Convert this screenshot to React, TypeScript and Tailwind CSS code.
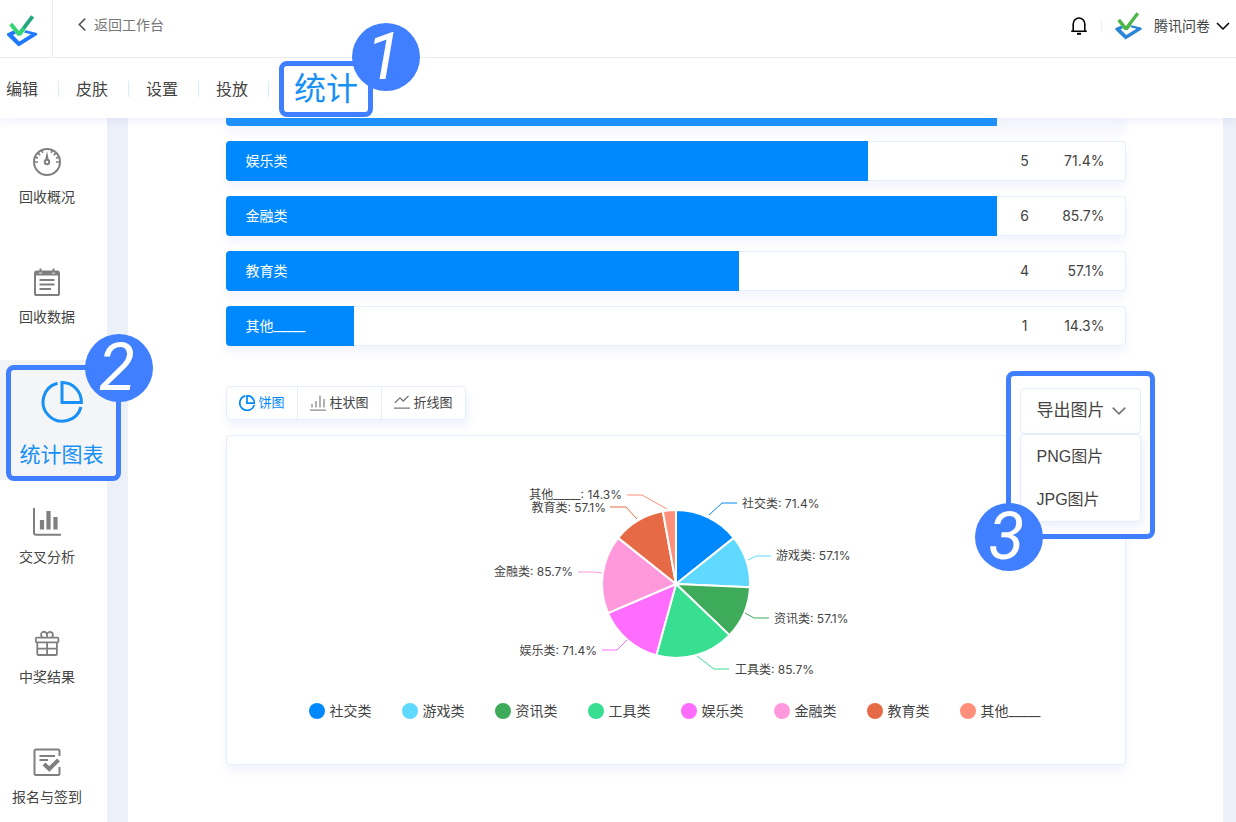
import React from "react";

type Slice = { name: string; count: number; percent: string; color: string };

const slices: Slice[] = [
  { name: "社交类", count: 5, percent: "71.4%", color: "#0089ff" },
  { name: "游戏类", count: 4, percent: "57.1%", color: "#5fd9ff" },
  { name: "资讯类", count: 4, percent: "57.1%", color: "#3dab5a" },
  { name: "工具类", count: 6, percent: "85.7%", color: "#38df91" },
  { name: "娱乐类", count: 5, percent: "71.4%", color: "#ff6dff" },
  { name: "金融类", count: 6, percent: "85.7%", color: "#ff99dc" },
  { name: "教育类", count: 4, percent: "57.1%", color: "#e66a45" },
  { name: "其他_____", count: 1, percent: "14.3%", color: "#ff8f7a" },
];

// Leader lines and label anchors, measured from the centre of the pie.
const leaders = [
  { line: "33,-69 46,-81 61,-81", x: 66, y: -76, end: false },
  { line: "72,-24 80,-28 95,-28", x: 100, y: -24, end: false },
  { line: "69,29 78,34 93,34", x: 98, y: 39, end: false },
  { line: "21,72 38,85 53,85", x: 59, y: 90, end: false },
  { line: "-49,56 -59,66 -74,66", x: -79, y: 71, end: true },
  { line: "-74,-11 -83,-12 -98,-12", x: -103, y: -8, end: true },
  { line: "-39,-65 -50,-77 -66,-77", x: -70, y: -72, end: true },
  { line: "-9,-75 -34,-89 -49,-89", x: -54, y: -85, end: true },
];

const RADIUS = 74;

function wedge(from: number, to: number) {
  const a = from * 2 * Math.PI;
  const b = to * 2 * Math.PI;
  return `M0 0L${RADIUS * Math.sin(a)} ${-RADIUS * Math.cos(a)}A${RADIUS} ${RADIUS} 0 0 1 ${RADIUS * Math.sin(b)} ${-RADIUS * Math.cos(b)}Z`;
}

function Logo({ className, tick, base, light }: { className: string; tick: string; base: string; light: string }) {
  return (
    <svg viewBox="0 0 30 32" className={className} fill="none" aria-hidden="true">
      <path d="M6.5 15.6L0 18.4V20.2L11.6 31.4L30 20V18L18.6 15.2L17 17.4L24 19.2L12.4 26.4L6 20L9 18.4Z" fill={base} />
      <path d="M11.8 19.6L25.6 1.4" stroke={tick} strokeWidth="3.8" />
      <path d="M3.8 9L12.6 20" stroke={light} strokeWidth="4" />
      <path d="M12.4 19.6L17 13.4" stroke={light} strokeWidth="3.8" />
    </svg>
  );
}

function Badge({ n, className }: { n: number; className: string }) {
  return (
    <span
      className={`absolute flex size-[68px] items-center justify-center rounded-full bg-[#407fff] pr-1 font-['Roboto',sans-serif] text-[66px] leading-none text-white italic ${className}`}
    >
      {n}
    </span>
  );
}

function Gauge() {
  return (
    <svg viewBox="0 0 28 28" className="size-7" fill="none" stroke="#7f7f7f" aria-hidden="true">
      <circle cx="14" cy="14" r="13" strokeWidth="2" />
      <path d="M1.5 14H5M23 14H26.5M4.6 4.6L7.2 7.2M23.4 4.6L20.8 7.2M2.6 9.2L4.9 10.1M25.4 9.2L23.1 10.1M8.6 2L9.8 4.8M19.4 2L18.2 4.8" strokeWidth="1.7" />
      <circle cx="14" cy="14" r="2.2" strokeWidth="2" />
      <path d="M14 3L15.8 12H12.2Z" fill="#7f7f7f" stroke="none" />
    </svg>
  );
}

function Notebook() {
  return (
    <svg viewBox="0 0 28 28" className="size-7" fill="none" stroke="#7f7f7f" aria-hidden="true">
      <rect x="2" y="3.5" width="24" height="23.5" rx="1.6" strokeWidth="2" />
      <path d="M2 3H6V5.5H9V3H19V5.5H22V3H26V7.5H2Z" fill="#7f7f7f" stroke="none" />
      <path d="M7.5 .5V4.5M20.5 .5V4.5" strokeWidth="2" />
      <path d="M6.5 12H21.5M6.5 16.5H21.5M6.5 21H18" strokeWidth="2" />
    </svg>
  );
}

function CrossChart() {
  return (
    <svg viewBox="0 0 28 28" className="size-7" fill="none" stroke="#7f7f7f" aria-hidden="true">
      <path d="M1 0V24.5Q1 26.8 3.2 26.8H28" strokeWidth="2" />
      <path d="M9 12V21.5M15.5 3V21.5M22.5 9V21.5" strokeWidth="4.2" />
    </svg>
  );
}

function Gift() {
  return (
    <svg viewBox="0 0 28 28" className="size-7" fill="none" stroke="#7f7f7f" strokeWidth="1.8" aria-hidden="true">
      <rect x="2.8" y="9.7" width="22.6" height="4.6" rx="1" />
      <path d="M4.3 14.3V25.9Q4.3 27 5.4 27H22.8Q23.9 27 23.9 25.9V14.3M4.3 20.6H23.9M14.1 14.3V27" />
      <path d="M9.5 9.4A3 3 0 1 1 14 6.6A3 3 0 1 1 18.7 9.4M14 6.4V9.4" />
    </svg>
  );
}

function SignIn() {
  return (
    <svg viewBox="0 0 28 28" className="size-7" fill="none" stroke="#7f7f7f" aria-hidden="true">
      <path d="M26.5 8V3Q26.5 1.5 25 1.5H3Q1.5 1.5 1.5 3V25.5Q1.5 27 3 27H25Q26.5 27 26.5 25.5V19" strokeWidth="2" />
      <path d="M6.5 8H22M6.5 12H15" strokeWidth="2" />
      <path d="M11 16L16.3 21L25.5 11.8" strokeWidth="4" />
    </svg>
  );
}

function PieOutline({ className, width }: { className: string; width: number }) {
  return (
    <svg viewBox="0 0 42 42" className={className} fill="none" stroke="currentColor" strokeWidth={width} aria-hidden="true">
      <path d="M16.5 2.2A19.3 19.3 0 1 0 40 26" />
      <path d="M21 1.6V21.5H40.4A19.4 19.4 0 0 0 21 1.6Z" />
    </svg>
  );
}

function Chevron({ className, d }: { className: string; d: string }) {
  return (
    <svg viewBox="0 0 14 14" className={className} fill="none" stroke="currentColor" strokeWidth="1.5" aria-hidden="true">
      <path d={d} />
    </svg>
  );
}

function SideItem({ label, children }: { label: string; children: React.ReactNode }) {
  return (
    <a href="#" className="flex h-[120px] flex-col items-center gap-[11px] pt-7 pr-[13px] text-sm text-[#444]">
      {children}
      <span className="whitespace-nowrap">{label}</span>
    </a>
  );
}

function ResultRow({ item }: { item: Slice }) {
  return (
    <li className="flex h-10 items-center rounded-sm bg-white text-sm shadow-[0_6px_10px_rgba(70,90,220,0.07)] inset-ring inset-ring-[#e4eefc]">
      <div className="flex h-full shrink-0 items-center rounded-l-sm bg-[#0089ff] pl-5 text-white" style={{ width: item.percent }}>
        {item.name}
      </div>
      <span className="ml-auto w-6 text-center">{item.count}</span>
      <span className="mr-[21px] w-[68px] text-right">{item.percent}</span>
    </li>
  );
}

function PieChart() {
  const total = slices.reduce((sum, s) => sum + s.count, 0);
  let run = 0;
  return (
    <svg viewBox="-449 -148 898 254" className="block w-full" role="img" aria-label="饼图">
      {slices.map((s) => {
        const from = run / total;
        run += s.count;
        return <path key={s.name} d={wedge(from, run / total)} fill={s.color} stroke="#fff" strokeWidth="2" strokeLinejoin="round" />;
      })}
      {slices.map((s, i) => (
        <g key={s.name}>
          <polyline points={leaders[i].line} fill="none" stroke={s.color} />
          <text x={leaders[i].x} y={leaders[i].y} textAnchor={leaders[i].end ? "end" : "start"} className="fill-[#444] text-xs">
            {s.name}: {s.percent}
          </text>
        </g>
      ))}
    </svg>
  );
}

export default function App() {
  return (
    <div className="flex h-screen flex-col overflow-hidden bg-white font-['Inter','Noto_Sans_CJK_SC',sans-serif] text-[#444]">
      <header className="relative z-10 shrink-0 bg-white shadow-[0_2px_10px_rgba(70,90,220,0.1)]">
        <div className="flex h-[58px] items-center border-b border-[#e9ebee]">
          <a href="#" aria-label="腾讯问卷" className="flex h-full w-[53px] items-center border-r border-[#e9ebee] pt-1 pl-[7px]">
            <Logo className="h-8 w-[30px]" tick="#22a67c" light="#35d571" base="#1f78ff" />
          </a>
          <a href="#" className="ml-[22px] flex items-center gap-1 pb-2 text-sm text-[#777]">
            <Chevron className="size-[15px] text-[#555]" d="M9.5 1.5L4 7L9.5 12.5" />
            返回工作台
          </a>
          <div className="ml-auto flex items-center pr-1.5 pb-1.5">
            <button type="button" aria-label="通知" className="mr-3.5 text-black">
              <svg viewBox="0 0 16 18" className="h-[18px] w-4" fill="none" stroke="currentColor" strokeWidth="1.6" aria-hidden="true">
                <path d="M2.2 14V7A5.8 6 0 0 1 13.8 7V14M.2 14.2H15.8" />
                <path d="M6 16.8H10" strokeWidth="2" />
              </svg>
            </button>
            <span className="mr-[13px] h-3 w-px bg-[#eceef0]" />
            <button type="button" className="flex items-center text-sm">
              <Logo className="mr-3 h-7 w-[27px]" tick="#4cb648" light="#4cb648" base="#2c86d8" />
              腾讯问卷
              <Chevron className="ml-1.5 size-3.5 text-black" d="M1 4L7 10L13 4" />
            </button>
          </div>
        </div>
        <nav className="flex h-[60px] items-center pt-px pl-1.5 text-base">
          {["编辑", "皮肤", "设置", "投放"].map((t) => (
            <div key={t} className="mr-[17px] flex items-center gap-5 last-of-type:mr-2.5">
              <a href="#">{t}</a>
              <span className="h-4 w-px bg-[#d9edfb]" />
            </div>
          ))}
          <a
            href="#"
            aria-current="page"
            className="relative flex h-14 items-center rounded-lg border-5 border-[#407fff] px-2.5 text-[32px] leading-none text-[#1890f5]"
          >
            统计
            <Badge n={1} className="-top-[43px] left-[68px]" />
          </a>
        </nav>
      </header>

      <div className="flex min-h-0 flex-1 bg-[#ecf0f8]">
        <aside className="w-[107px] shrink-0 bg-white pt-0.5">
          <SideItem label="回收概况"><Gauge /></SideItem>
          <SideItem label="回收数据"><Notebook /></SideItem>
          <div className="relative h-[120px] bg-[#f1f3f6]">
            <a
              href="#"
              aria-current="page"
              className="absolute top-[5px] left-1.5 flex h-[116px] w-[115px] flex-col items-center gap-[18px] rounded-lg border-5 border-[#407fff] bg-[#f4f5f7] pt-[11px] pr-1 text-[21px] leading-7 whitespace-nowrap text-[#1890f5]"
            >
              <PieOutline className="size-[42px] shrink-0" width={3} />
              统计图表
              <Badge n={2} className="-top-9 left-[74px]" />
            </a>
          </div>
          <SideItem label="交叉分析"><CrossChart /></SideItem>
          <SideItem label="中奖结果"><Gift /></SideItem>
          <SideItem label="报名与签到"><SignIn /></SideItem>
        </aside>

        <main className="mr-[13px] ml-[21px] min-w-0 flex-1 bg-white">
          <div className="mx-auto max-w-[900px]">
            <div className="h-2 overflow-hidden rounded-b-sm bg-[#f9fafe] shadow-[0_6px_10px_rgba(70,90,220,0.07)]">
              <div className="h-full bg-[#1e93fb]" style={{ width: slices[3].percent }} />
            </div>
            <ul className="mt-[15px] flex flex-col gap-[15px]">
              {slices.slice(4).map((s) => (
                <ResultRow key={s.name} item={s} />
              ))}
            </ul>

            <div className="relative mt-10 flex">
              <div className="flex h-[34px] rounded-sm border border-[#e4eefc] text-[13px] shadow-[2px_6px_10px_rgba(70,90,220,0.08)]">
                <button type="button" className="flex items-center gap-1 px-3 text-[#0089ff]">
                  <PieOutline className="size-4" width={4.5} />
                  饼图
                </button>
                <button type="button" className="flex items-center gap-1 border-x border-[#e4eefc] px-3">
                  <svg viewBox="0 0 16 16" className="size-4" fill="none" stroke="#8a8a8a" strokeWidth="1.3" aria-hidden="true">
                    <path d="M0 15.2H16M2 12.5V9M6 12.5V6M10 12.5V.5M14 12.5V4" />
                  </svg>
                  柱状图
                </button>
                <button type="button" className="flex items-center gap-1 px-3">
                  <svg viewBox="0 0 16 16" className="size-4" fill="none" stroke="#777" strokeWidth="1.3" aria-hidden="true">
                    <path d="M0 13.2H16M1 7.8L6 2.8L9.2 6L14.5 1" />
                  </svg>
                  折线图
                </button>
              </div>

              <div className="absolute -top-[15px] -right-[29px] h-[168px] w-[149px] rounded-lg border-5 border-[#407fff] bg-white pt-3 pl-[9px]">
                <button
                  type="button"
                  aria-expanded="true"
                  className="flex h-[46px] w-[121px] items-center gap-1.5 rounded-sm border border-[#e4eefc] pl-4 text-[17px] whitespace-nowrap"
                >
                  导出图片
                  <Chevron className="size-4 text-[#777]" d="M1.5 4L7 9.5L12.5 4" />
                </button>
                <ul className="w-[121px] rounded-sm border border-[#e4eefc] font-['Liberation_Sans','Noto_Sans_CJK_SC',sans-serif] text-base shadow-[2px_4px_8px_rgba(70,90,220,0.1)]">
                  {["PNG图片", "JPG图片"].map((t) => (
                    <li key={t}>
                      <button type="button" className="flex h-[43px] w-full items-center pl-4">{t}</button>
                    </li>
                  ))}
                </ul>
                <Badge n={3} className="top-[127px] -left-9" />
              </div>
            </div>

            <section className="mt-[15px] rounded-sm border border-[#e4eefc] pb-[43px] shadow-[0_6px_10px_rgba(70,90,220,0.07)]">
              <PieChart />
              <ul className="mt-[11px] flex flex-wrap justify-center gap-x-[30px] gap-y-2 pr-0.5 text-sm">
                {slices.map((s) => (
                  <li key={s.name} className="flex items-center gap-[5px]">
                    <span className="size-4 rounded-full" style={{ backgroundColor: s.color }} />
                    {s.name}
                  </li>
                ))}
              </ul>
            </section>
          </div>
        </main>
      </div>
    </div>
  );
}
